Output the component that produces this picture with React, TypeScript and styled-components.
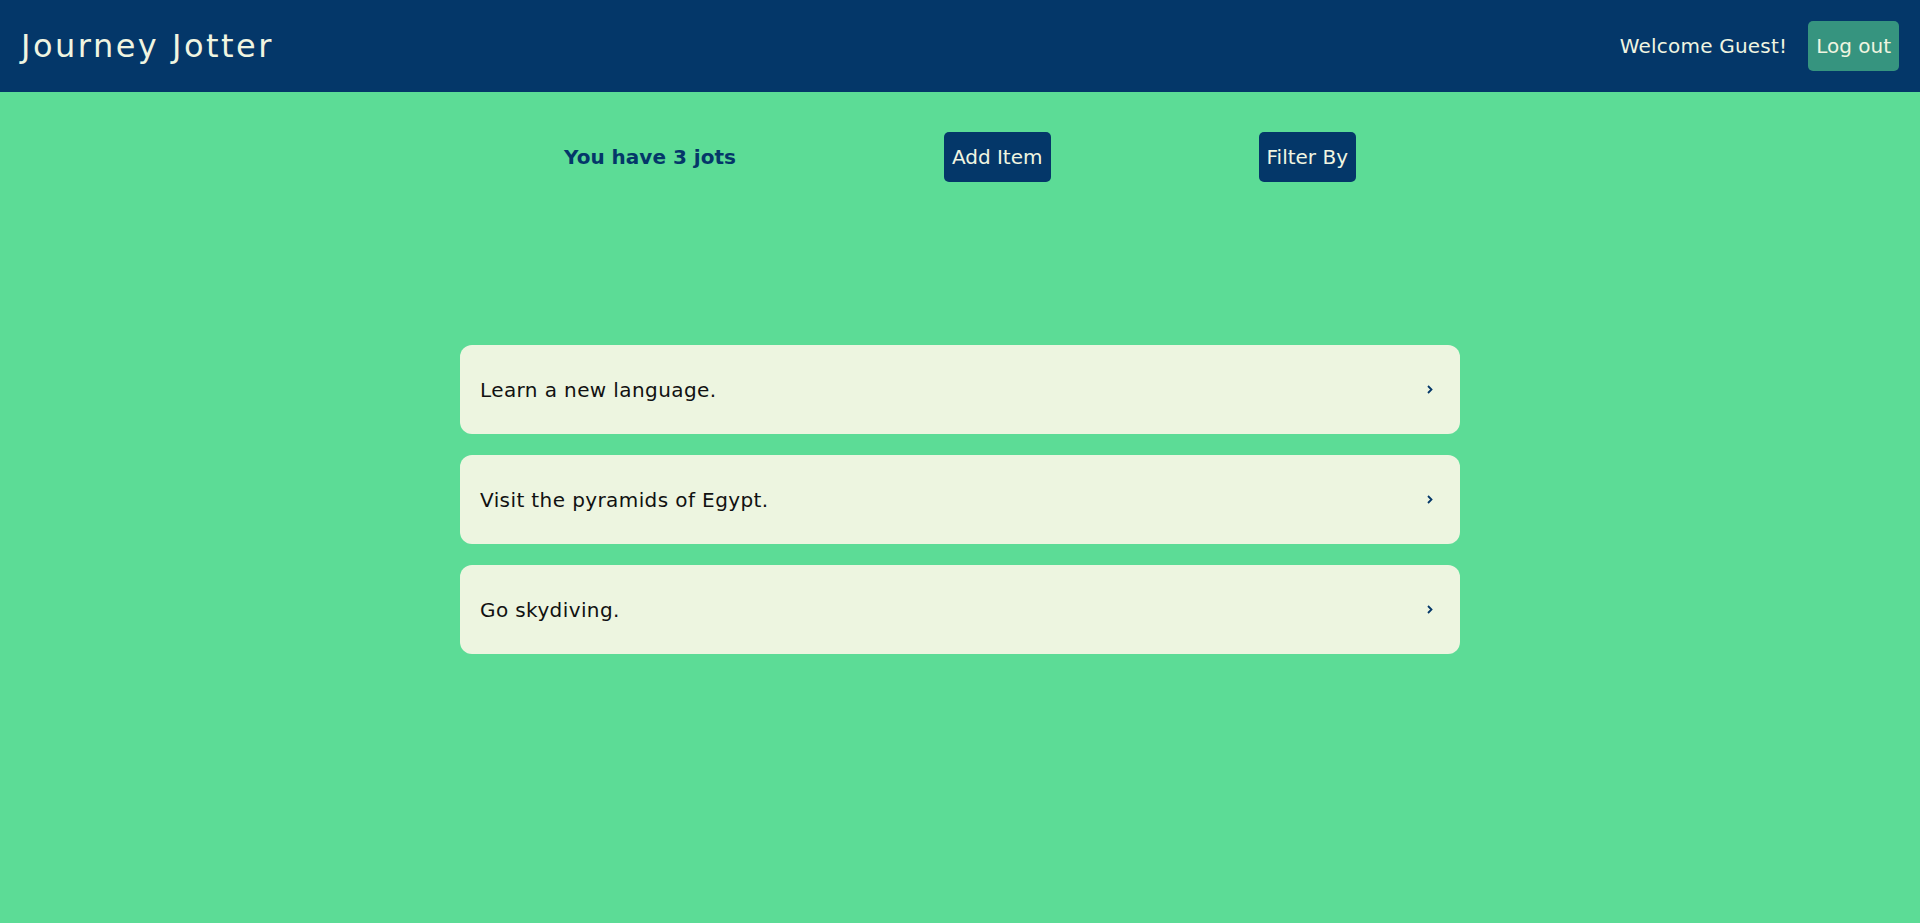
import React from "react";
import styled, { createGlobalStyle } from "styled-components";

const GlobalStyle = createGlobalStyle`
  html, body {
    margin: 0;
    padding: 0;
    background: #5cdc96;
    font-family: "DejaVu Sans", "Liberation Sans", sans-serif;
  }
`;

const Page = styled.div`
  min-height: 923px;
  background: #5cdc96;
`;

const Header = styled.header`
  height: 92px;
  background: #043769;
  display: flex;
  align-items: center;
  justify-content: space-between;
  padding: 0 21px;
  box-sizing: border-box;
`;

const Title = styled.h1`
  margin: 0;
  color: #f0f5e1;
  font-size: 32px;
  font-weight: normal;
  letter-spacing: 2.5px;
`;

const UserArea = styled.div`
  display: flex;
  align-items: center;
  gap: 21px;
`;

const Welcome = styled.span`
  color: #f0f5e1;
  font-size: 20px;
  letter-spacing: 0.2px;
`;

const Button = styled.button<{ $tone?: "navy" | "teal" }>`
  height: 50px;
  padding: 0 8px;
  border: none;
  border-radius: 5px;
  background: ${(p) => (p.$tone === "teal" ? "#36947f" : "#043769")};
  color: #f0f5e1;
  font-family: inherit;
  font-size: 20px;
  cursor: pointer;
`;

const Toolbar = styled.section`
  width: 1000px;
  margin: 40px auto 0;
  display: flex;
  align-items: center;
  justify-content: space-around;
`;

const Count = styled.h2`
  margin: 0;
  color: #043769;
  font-size: 20px;
  font-weight: 600;
`;

const List = styled.ul`
  list-style: none;
  width: 1000px;
  margin: 163px auto 0;
  padding: 0;
  display: flex;
  flex-direction: column;
  gap: 21px;
`;

const Card = styled.li`
  height: 89px;
  box-sizing: border-box;
  padding: 0 27px 0 20px;
  background: #edf5e0;
  border-radius: 12px;
  display: flex;
  align-items: center;
  justify-content: space-between;
  color: #111;
  font-size: 20px;
  letter-spacing: 0.4px;
  cursor: pointer;
`;

const Chevron = () => (
  <svg width="6" height="9" viewBox="0 0 6 9" fill="none">
    <path d="M1 1l3.5 3.5L1 8" stroke="#043769" strokeWidth="1.8" />
  </svg>
);

const jots = [
  "Learn a new language.",
  "Visit the pyramids of Egypt.",
  "Go skydiving.",
];

export default function App() {
  return (
    <Page>
      <GlobalStyle />
      <Header>
        <Title>Journey Jotter</Title>
        <UserArea>
          <Welcome>Welcome Guest!</Welcome>
          <Button $tone="teal">Log out</Button>
        </UserArea>
      </Header>
      <Toolbar>
        <Count>You have {jots.length} jots</Count>
        <Button>Add Item</Button>
        <Button>Filter By</Button>
      </Toolbar>
      <List>
        {jots.map((j) => (
          <Card key={j}>
            <span>{j}</span>
            <Chevron />
          </Card>
        ))}
      </List>
    </Page>
  );
}
